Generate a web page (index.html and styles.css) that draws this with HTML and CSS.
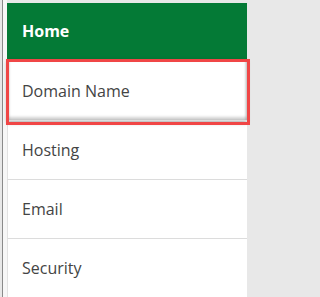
FILE: index.html
```html
<!DOCTYPE html>
<html>
<head>
<meta charset="utf-8">
<link rel="stylesheet" href="styles.css">
</head>
<body>
<div class="rail"></div>
<nav class="menu">
  <a class="item home">Home</a>
  <a class="item active">Domain Name</a>
  <a class="item">Hosting</a>
  <a class="item">Email</a>
  <a class="item">Security</a>
</nav>
</body>
</html>
```
FILE: styles.css
```css
html, body {
  margin: 0;
  padding: 0;
}
body {
  width: 251px;
  height: 297px;
  overflow: hidden;
  display: flex;
  background: #e8e8e8;
  font-family: "Open Sans", "Liberation Sans", sans-serif;
  font-size: 16px;
}
.rail {
  width: 4px;
  margin-left: 2px;
  border-left: 1px solid #8a8a8a;
  background: #f7f7f7;
}
.menu {
  flex: 1;
  margin-top: 3px;
  margin-right: 4px;
  display: flex;
  flex-direction: column;
  background: #fff;
}
.item {
  display: block;
  position: relative;
  padding: 18px 0 18px 14px;
  line-height: 22px;
  color: #444;
  text-decoration: none;
  border-left: 1px solid #e2e2e2;
  border-bottom: 1px solid #dcdcdc;
}
.home {
  background: #047a36;
  color: #fff;
  font-weight: 700;
  padding: 17px 0 17px 15px;
  border: 0;
}
.active {
  padding-top: 21px;
  box-shadow: inset 0 2px 2px rgba(0,0,0,0.14), inset 2px 0 2px rgba(0,0,0,0.08), inset -2px 0 2px rgba(0,0,0,0.12), inset 0 -3px 3px rgba(0,0,0,0.18), 0 2px 4px rgba(0,0,0,0.3);
  z-index: 1;
}
.active::after {
  content: "";
  position: absolute;
  left: -2px;
  right: -3px;
  top: 0;
  bottom: -5px;
  border: 3px solid #f04646;
}
```
